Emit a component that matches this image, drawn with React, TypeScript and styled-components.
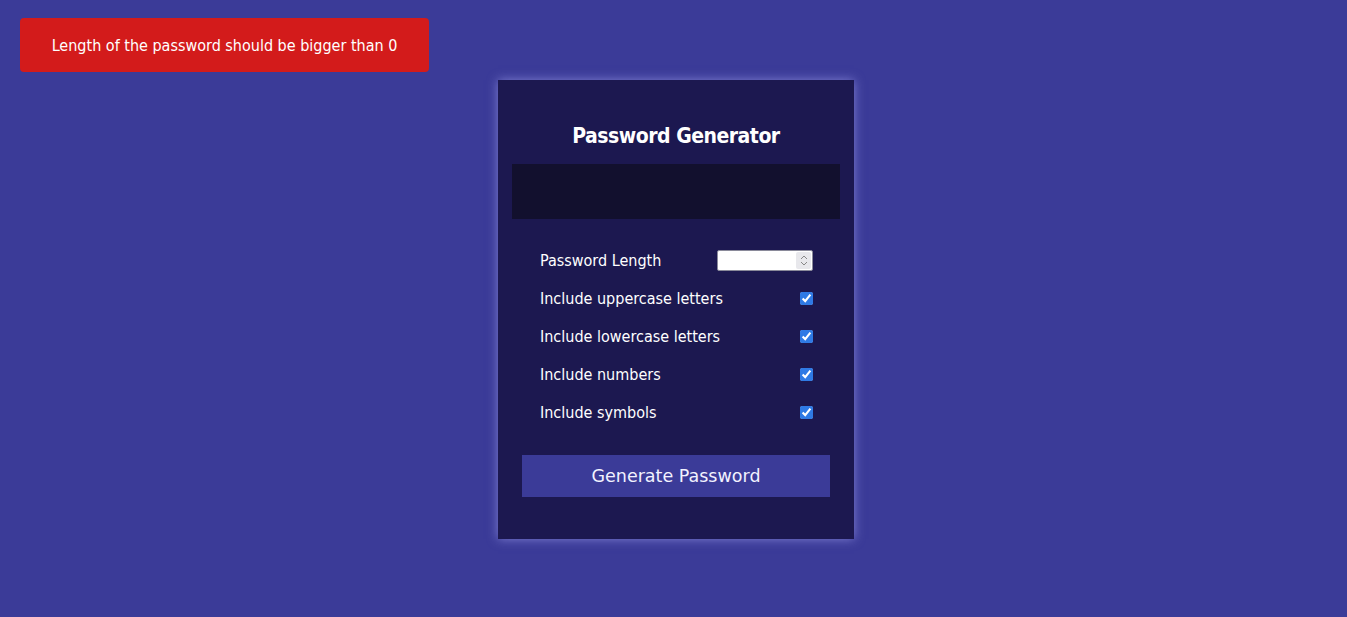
import React, { useState } from 'react';
import styled, { createGlobalStyle } from 'styled-components';

const GlobalStyle = createGlobalStyle`
  html, body {
    margin: 0;
    padding: 0;
    background: #3b3b98;
  }
  body {
    font-family: "Liberation Sans Narrow", "DejaVu Sans Condensed", "DejaVu Sans", sans-serif;
    font-stretch: condensed;
  }
`;

const Page = styled.div`
  min-height: 617px;
  display: flex;
  justify-content: center;
  align-items: flex-start;
  padding: 80px 0 0 5px;
  box-sizing: border-box;
`;

const Toast = styled.div`
  position: absolute;
  top: 18px;
  left: 20px;
  width: 409px;
  height: 54px;
  display: flex;
  align-items: center;
  justify-content: center;
  background: #d31b1b;
  border-radius: 4px;
  color: #fff;
  font-size: 16px;
`;

const Card = styled.div`
  width: 356px;
  box-sizing: border-box;
  padding: 0 14px 42px;
  background: #1c1850;
  box-shadow: 0 0 10px rgba(180, 180, 255, 0.55);
  color: #fff;
`;

const Title = styled.h2`
  margin: 0 0 11px;
  padding-top: 39px;
  line-height: 34px;
  font-size: 21px;
  font-weight: 600;
  letter-spacing: -0.5px;
  text-align: center;
`;

const Result = styled.div`
  height: 55px;
  background: #12102e;
`;

const Settings = styled.div`
  margin-top: 22px;
  padding: 0 27px 0 28px;
`;

const Row = styled.div`
  height: 38px;
  display: flex;
  align-items: center;
  justify-content: space-between;
  font-size: 16px;
`;

const NumberField = styled.div`
  width: 96px;
  height: 21px;
  box-sizing: border-box;
  display: flex;
  border: 1px solid #8a8a9a;
  border-radius: 2px;
  background: #fff;
  overflow: hidden;
`;

const LengthInput = styled.input`
  flex: 1;
  min-width: 0;
  border: none;
  outline: none;
  padding: 0 4px;
  background: transparent;
  appearance: textfield;
  &::-webkit-inner-spin-button,
  &::-webkit-outer-spin-button {
    -webkit-appearance: none;
    margin: 0;
  }
`;

const Spinner = styled.div`
  width: 15px;
  margin: 1px;
  border-radius: 2px;
  background: #e8e8ec;
  display: flex;
  align-items: center;
  justify-content: center;
`;

const Check = styled.input`
  width: 13px;
  height: 13px;
  margin: 0;
  accent-color: #2f7ae5;
`;

const GenerateButton = styled.button`
  display: block;
  width: 308px;
  height: 42px;
  margin: 24px auto 0;
  border: none;
  background: #3b3b98;
  color: #f2f2ff;
  font-family: "DejaVu Sans", sans-serif;
  font-size: 17.5px;
  cursor: pointer;
`;

const options = [
  'Include uppercase letters',
  'Include lowercase letters',
  'Include numbers',
  'Include symbols',
];

export default function App() {
  const [checked, setChecked] = useState<boolean[]>(options.map(() => true));

  return (
    <>
      <GlobalStyle />
      <Toast>Length of the password should be bigger than 0</Toast>
      <Page>
        <Card>
          <Title>Password Generator</Title>
          <Result />
          <Settings>
            <Row>
              <label>Password Length</label>
              <NumberField>
                <LengthInput type="number" />
                <Spinner>
                  <svg width="8" height="13" viewBox="0 0 8 13" fill="none" stroke="#888" strokeWidth="1">
                    <path d="M1 5 L4 2 L7 5" />
                    <path d="M1 8 L4 11 L7 8" />
                  </svg>
                </Spinner>
              </NumberField>
            </Row>
            {options.map((label, i) => (
              <Row key={label}>
                <label>{label}</label>
                <Check
                  type="checkbox"
                  checked={checked[i]}
                  onChange={() => setChecked(c => c.map((v, j) => (j === i ? !v : v)))}
                />
              </Row>
            ))}
          </Settings>
          <GenerateButton>Generate Password</GenerateButton>
        </Card>
      </Page>
    </>
  );
}
